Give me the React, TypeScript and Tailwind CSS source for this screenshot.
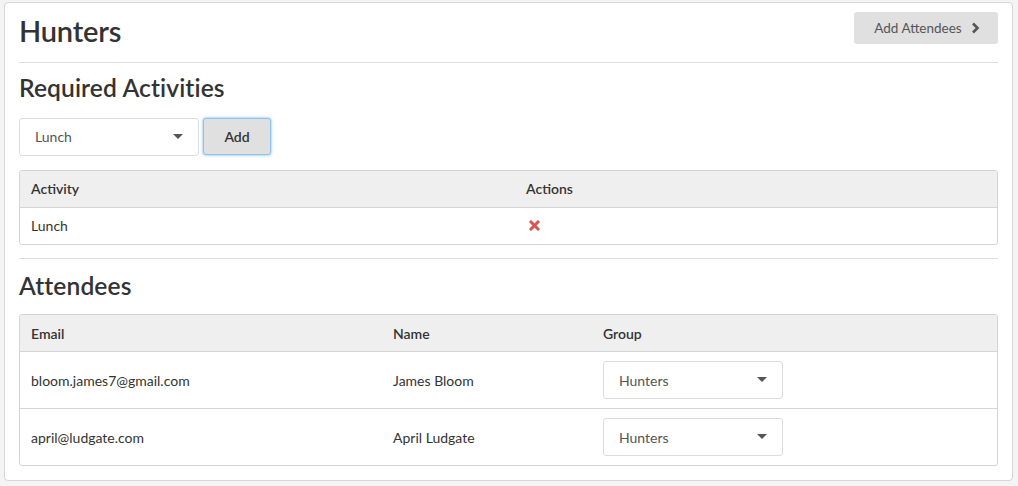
import React from 'react';

const font = { fontFamily: 'Lato, "Open Sans", sans-serif' };

const Caret = () => (
  <svg width="10" height="6" viewBox="0 0 10 6" className="text-[#555]">
    <path d="M0 0h10L5 5z" fill="currentColor" />
  </svg>
);

const Chevron = () => (
  <svg width="9" height="12" viewBox="0 0 9 12" fill="none" stroke="currentColor" strokeWidth="2.6" strokeLinecap="butt">
    <path d="M2 1.5l4.5 4.5L2 10.5" />
  </svg>
);

const RemoveIcon = () => (
  <svg width="11" height="11" viewBox="0 0 11 11" fill="none" stroke="#d9534f" strokeWidth="3" strokeLinecap="square">
    <path d="M2 2l7 7M9 2l-7 7" />
  </svg>
);

const Select: React.FC<{ value: string }> = ({ value }) => (
  <div className="flex items-center justify-between w-[180px] h-[38px] pl-[15px] pr-[15px] bg-white border border-[#dcdcdc] rounded-[3px] text-[14px] text-[#555]">
    <span>{value}</span>
    <Caret />
  </div>
);

const attendees = [
  { email: 'bloom.james7@gmail.com', name: 'James Bloom', group: 'Hunters' },
  { email: 'april@ludgate.com', name: 'April Ludgate', group: 'Hunters' },
];

export default function App() {
  return (
    <div className="bg-[#f4f4f4] w-[1018px] h-[486px] pt-[2px] pl-[4px]" style={font}>
      <div className="w-[1009px] h-[479px] bg-white border border-[#d6d6d6] rounded-[4px] px-[14px] pt-[9px] text-[#333]">
        {/* Header */}
        <div className="flex items-start justify-between h-[51px] border-b border-[#dddddd]">
          <h1 className="text-[29px] font-semibold leading-none mt-[4px] tracking-[-0.2px]">Hunters</h1>
          <button className="flex items-center gap-[9px] h-[32px] w-[144px] pl-[2px] justify-center bg-[#e0e0e0] rounded-[3px] text-[13.5px] text-[#555]">
            Add Attendees
            <Chevron />
          </button>
        </div>

        {/* Required activities */}
        <h2 className="text-[24.6px] font-semibold leading-none mt-[13px] tracking-[0.1px]">Required Activities</h2>
        <div className="flex items-center gap-[4px] mt-[17px]">
          <Select value="Lunch" />
          <button className="w-[68px] h-[37px] bg-[#e0e0e0] border border-[#8ec3f0] rounded-[3px] shadow-[0_0_3px_#66afe9] text-[14px] font-semibold text-[#333]">
            Add
          </button>
        </div>

        <div className="mt-[14px] border border-[#d4d4d4] rounded-[3px] overflow-hidden text-[14px]">
          <div className="flex items-center h-[37px] bg-[#efefef] border-b border-[#d4d4d4] font-semibold px-[11px]">
            <div className="w-[495px]">Activity</div>
            <div>Actions</div>
          </div>
          <div className="flex items-center h-[36px] px-[11px]">
            <div className="w-[495px]">Lunch</div>
            <div className="pl-[3px] flex items-center"><RemoveIcon /></div>
          </div>
        </div>

        <div className="mt-[13px] border-t border-[#dddddd]" />

        {/* Attendees */}
        <h2 className="text-[24.6px] font-semibold leading-none mt-[15px] tracking-[0.1px]">Attendees</h2>

        <div className="mt-[16px] border border-[#d4d4d4] rounded-[3px] overflow-hidden text-[14px]">
          <div className="flex items-center h-[37px] bg-[#efefef] border-b border-[#d4d4d4] font-semibold px-[11px]">
            <div className="w-[362px]">Email</div>
            <div className="w-[210px]">Name</div>
            <div>Group</div>
          </div>
          {attendees.map((a, i) => (
            <div
              key={a.email}
              className={i > 0 ? 'flex items-center h-[57px] px-[11px] border-t border-[#d4d4d4]' : 'flex items-center h-[56px] px-[11px]'}
            >
              <div className="w-[362px]">{a.email}</div>
              <div className="w-[210px]">{a.name}</div>
              <Select value={a.group} />
            </div>
          ))}
        </div>
      </div>
    </div>
  );
}
